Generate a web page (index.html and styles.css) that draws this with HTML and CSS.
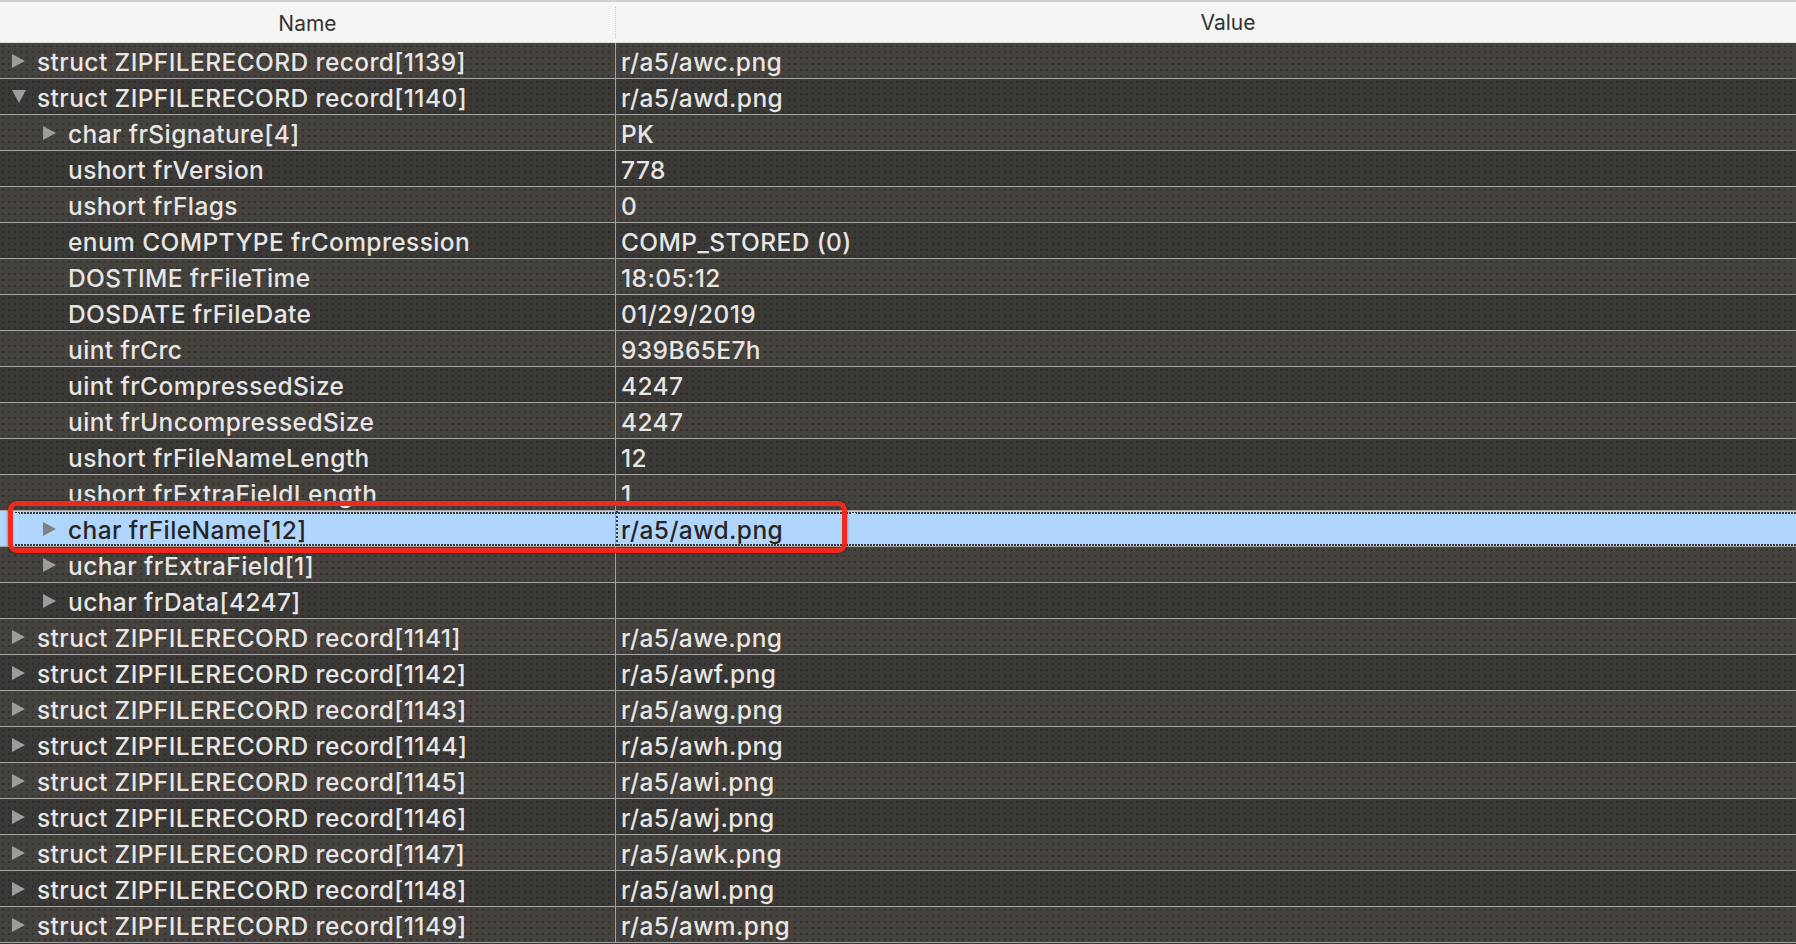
FILE: index.html
```html
<!DOCTYPE html>
<html>
<head>
<meta charset="utf-8">
<title>Template Results</title>
<link rel="stylesheet" href="styles.css">
</head>
<body>
<div class="tree">
  <div class="header">
    <div class="hcell hname">Name</div>
    <div class="hcell hvalue">Value</div>
  </div>
  <div class="rows">
    <div class="row"><div class="cell name l0"><span class="tri right"></span><span class="label">struct ZIPFILERECORD record[1139]</span></div><div class="cell value">r/a5/awc.png</div></div>
    <div class="row"><div class="cell name l0"><span class="tri down"></span><span class="label">struct ZIPFILERECORD record[1140]</span></div><div class="cell value">r/a5/awd.png</div></div>
    <div class="row"><div class="cell name l1"><span class="tri right"></span><span class="label">char frSignature[4]</span></div><div class="cell value">PK</div></div>
    <div class="row"><div class="cell name l1"><span class="tri none"></span><span class="label">ushort frVersion</span></div><div class="cell value">778</div></div>
    <div class="row"><div class="cell name l1"><span class="tri none"></span><span class="label">ushort frFlags</span></div><div class="cell value">0</div></div>
    <div class="row"><div class="cell name l1"><span class="tri none"></span><span class="label">enum COMPTYPE frCompression</span></div><div class="cell value">COMP_STORED (0)</div></div>
    <div class="row"><div class="cell name l1"><span class="tri none"></span><span class="label">DOSTIME frFileTime</span></div><div class="cell value">18:05:12</div></div>
    <div class="row"><div class="cell name l1"><span class="tri none"></span><span class="label">DOSDATE frFileDate</span></div><div class="cell value">01/29/2019</div></div>
    <div class="row"><div class="cell name l1"><span class="tri none"></span><span class="label">uint frCrc</span></div><div class="cell value">939B65E7h</div></div>
    <div class="row"><div class="cell name l1"><span class="tri none"></span><span class="label">uint frCompressedSize</span></div><div class="cell value">4247</div></div>
    <div class="row"><div class="cell name l1"><span class="tri none"></span><span class="label">uint frUncompressedSize</span></div><div class="cell value">4247</div></div>
    <div class="row"><div class="cell name l1"><span class="tri none"></span><span class="label">ushort frFileNameLength</span></div><div class="cell value">12</div></div>
    <div class="row"><div class="cell name l1"><span class="tri none"></span><span class="label">ushort frExtraFieldLength</span></div><div class="cell value">1</div></div>
    <div class="row selected"><div class="cell name l1"><span class="tri right"></span><span class="label">char frFileName[12]</span></div><div class="cell value focus">r/a5/awd.png</div></div>
    <div class="row"><div class="cell name l1"><span class="tri right"></span><span class="label">uchar frExtraField[1]</span></div><div class="cell value"></div></div>
    <div class="row"><div class="cell name l1"><span class="tri right"></span><span class="label">uchar frData[4247]</span></div><div class="cell value"></div></div>
    <div class="row"><div class="cell name l0"><span class="tri right"></span><span class="label">struct ZIPFILERECORD record[1141]</span></div><div class="cell value">r/a5/awe.png</div></div>
    <div class="row"><div class="cell name l0"><span class="tri right"></span><span class="label">struct ZIPFILERECORD record[1142]</span></div><div class="cell value">r/a5/awf.png</div></div>
    <div class="row"><div class="cell name l0"><span class="tri right"></span><span class="label">struct ZIPFILERECORD record[1143]</span></div><div class="cell value">r/a5/awg.png</div></div>
    <div class="row"><div class="cell name l0"><span class="tri right"></span><span class="label">struct ZIPFILERECORD record[1144]</span></div><div class="cell value">r/a5/awh.png</div></div>
    <div class="row"><div class="cell name l0"><span class="tri right"></span><span class="label">struct ZIPFILERECORD record[1145]</span></div><div class="cell value">r/a5/awi.png</div></div>
    <div class="row"><div class="cell name l0"><span class="tri right"></span><span class="label">struct ZIPFILERECORD record[1146]</span></div><div class="cell value">r/a5/awj.png</div></div>
    <div class="row"><div class="cell name l0"><span class="tri right"></span><span class="label">struct ZIPFILERECORD record[1147]</span></div><div class="cell value">r/a5/awk.png</div></div>
    <div class="row"><div class="cell name l0"><span class="tri right"></span><span class="label">struct ZIPFILERECORD record[1148]</span></div><div class="cell value">r/a5/awl.png</div></div>
    <div class="row"><div class="cell name l0"><span class="tri right"></span><span class="label">struct ZIPFILERECORD record[1149]</span></div><div class="cell value">r/a5/awm.png</div></div>
  </div>
  <div class="annotation"></div>
</div>
</body>
</html>
```
FILE: styles.css
```css
html, body {
  margin: 0;
  padding: 0;
  background: #3c3a36;
  overflow: hidden;
}
.tree {
  position: relative;
  width: 1796px;
  height: 944px;
  font-family: Inter, "Liberation Sans", sans-serif;
  overflow: hidden;
}
.header {
  display: grid;
  grid-template-columns: 616px 1fr;
  height: 40px;
  border-top: 2px solid #d0d0d0;
  border-bottom: 1px solid #e2e2e2;
  background: #f5f5f5;
  color: #333333;
  font-size: 21px;
}
.hcell {
  display: flex;
  align-items: center;
  justify-content: center;
  padding-top: 1px;
}
.hname {
  border-right: 1px dotted #c8c8c8;
  margin: 5px 0 4px 0;
}
.hvalue {
  padding-left: 44px;
}
.rows {
  display: flex;
  flex-direction: column;
}
.row {
  display: grid;
  grid-template-columns: 616px 1fr;
  height: 35px;
  border-bottom: 1px solid #a3a3a3;
  background-color: #46423d;
  background-image: radial-gradient(rgba(0,0,0,0.22) 0.7px, transparent 0.9px);
  background-size: 6px 6px;
  color: #e6e6e6;
  font-size: 24.5px;
  font-weight: 500;
  letter-spacing: 0.4px;
  position: relative;
}
.row:nth-child(even) {
  background-color: #3b3935;
}
.cell {
  display: flex;
  align-items: center;
  padding-top: 3px;
  box-sizing: border-box;
  white-space: nowrap;
  overflow: hidden;
}
.name {
  border-right: 1px solid #a3a3a3;
}
.l0 { padding-left: 12px; }
.l1 { padding-left: 43px; }
.value { padding-left: 5px; }
.tri {
  width: 0;
  height: 0;
  margin-right: 12px;
  flex: none;
  margin-top: -3px;
}
.tri.right {
  border-left: 13px solid #9d9d9d;
  border-top: 7px solid transparent;
  border-bottom: 7px solid transparent;
}
.tri.down {
  border-top: 13px solid #9d9d9d;
  border-left: 7px solid transparent;
  border-right: 7px solid transparent;
  margin-right: 11px;
}
.tri.none {
  width: 13px;
}
.row.selected {
  background: #b1d6fd;
  color: #262626;
}
.row.selected .tri.right {
  border-left-color: #7f7f7f;
}
.row.selected::before,
.row.selected::after {
  content: "";
  position: absolute;
  left: 15px;
  right: 0;
  height: 2px;
  background: repeating-linear-gradient(90deg, #3a3a3a 0 2px, transparent 2px 3px);
  pointer-events: none;
}
.row.selected::before { top: 1px; }
.row.selected::after { bottom: 0; }
.row.selected .name::before {
  content: "";
  position: absolute;
  left: 15px;
  top: 0;
  bottom: 0;
  width: 4px;
  background: repeating-linear-gradient(0deg, #d8d8d8 0 1px, transparent 1px 2px);
}
.value.focus {
  position: relative;
  border-left: 2px dotted #3a3a3a;
  padding-left: 3px;
}
.value.focus::after {
  content: "";
  position: absolute;
  left: 234px;
  top: 0;
  bottom: 0;
  width: 4px;
  background: repeating-linear-gradient(0deg, #cfcfcf 0 1px, transparent 1px 2px);
}
.annotation {
  position: absolute;
  left: 8px;
  top: 501px;
  width: 839px;
  height: 52px;
  box-sizing: border-box;
  border: 5px solid #ee2a1f;
  border-radius: 9px;
  box-shadow: 0 0 3px rgba(0,0,0,0.55);
  pointer-events: none;
}
```
